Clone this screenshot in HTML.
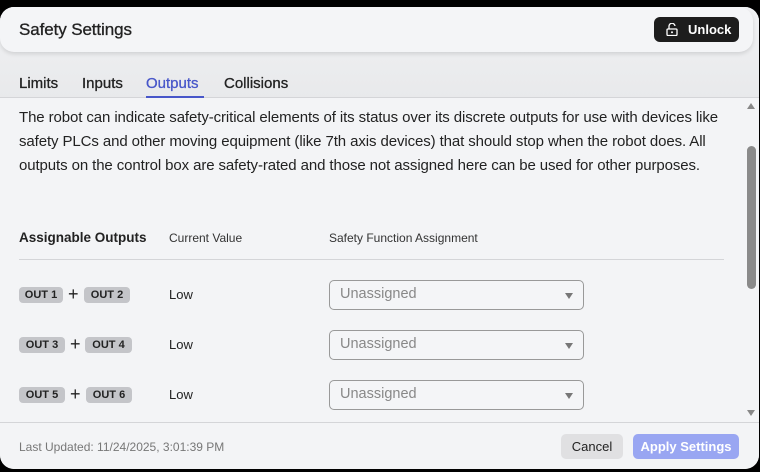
<!DOCTYPE html>
<html><head><style>
*{box-sizing:border-box;margin:0;padding:0}
body{width:760px;height:472px;background:#000;position:relative;overflow:hidden;font-family:"Liberation Sans",sans-serif;color:#222}
.modal{position:absolute;left:0;top:7px;width:759px;height:462px;background:#f3f4f6;border-radius:14px;overflow:hidden}
.tabsbg{position:absolute;left:0;top:0;width:100%;height:91px;background:linear-gradient(#f1f2f4,#e8e9eb)}
.hdr{position:absolute;left:0;top:0;width:753px;height:45px;background:#f4f5f7;border-radius:14px;box-shadow:0 2px 4px rgba(0,0,0,.12)}
.hdr h1{position:absolute;left:19px;top:13px;font-size:17px;font-weight:normal;color:#222;letter-spacing:-.1px;-webkit-text-stroke:.3px #222}
.unlock{position:absolute;left:654px;top:10px;width:85px;height:25px;background:#1d1d1d;border-radius:6px;color:#fff;font-size:13px;font-weight:bold}
.unlock span{position:absolute;left:34px;top:5px}
.unlock svg{position:absolute;left:12px;top:6px}
.tabs{position:absolute;top:68px;left:19px;font-size:15px;color:#222;-webkit-text-stroke:.3px #222}
.tabs span{position:absolute;white-space:nowrap}
.line{position:absolute;left:0;top:90px;width:100%;height:1px;background:#d4d5d8}
.content{position:absolute;left:0;top:91px;width:745px;height:325px;background:#f3f4f6}
p.desc{position:absolute;left:19px;top:8px;width:712px;font-size:15px;line-height:24px;color:#222;letter-spacing:-.1px}
.th{position:absolute;top:224px;font-size:12px;color:#333}
.sep{position:absolute;left:19px;top:252px;width:705px;height:1px;background:#d4d5d8}
.tag{position:absolute;height:16px;background:#c4c5c9;border-radius:4px;font-size:11px;font-weight:bold;line-height:16px;text-align:center;color:#222}
.plus{position:absolute;font-size:18px;color:#222}
.low{position:absolute;left:169px;font-size:13px;color:#222}
.sel{position:absolute;left:329px;width:255px;height:30px;border:1px solid #999;border-radius:5px;background:#f4f5f7;font-size:14.5px;color:#888;padding:5px 10px}
.sel i{position:absolute;right:10px;top:12px;width:0;height:0;border-left:4px solid transparent;border-right:4px solid transparent;border-top:6px solid #777}
.thumb{position:absolute;left:747px;top:146px;width:9px;height:143px;background:#8a8a8a;border-radius:5px}
.lu{position:absolute;left:19px;top:17px;font-size:12px;color:#777}
.cancel{position:absolute;left:561px;top:18px;width:62px;height:25px;background:#e0e0e2;border-radius:5px;font-size:13px;color:#222;text-align:center;line-height:25px}
.apply{position:absolute;left:633px;top:18px;width:106px;height:25px;background:#99a6f2;border-radius:5px;font-size:13px;font-weight:bold;color:#fff;text-align:center;line-height:25px}
</style></head><body>
<div class="modal">
<div class="tabsbg"></div>
<div class="hdr"><h1>Safety Settings</h1>
<div class="unlock"><svg width="12" height="13" viewBox="0 0 12 13"><path d="M3 6V3.5a3 3 0 0 1 6-.5" fill="none" stroke="#fff" stroke-width="1.3"/><rect x="1" y="6" width="10" height="6.5" rx="1" fill="none" stroke="#fff" stroke-width="1.3"/><circle cx="6" cy="9.2" r="1" fill="#fff"/></svg><span>Unlock</span></div></div>
<div class="tabs"><span style="left:0;top:0">Limits</span><span style="left:63px;top:0">Inputs</span><span style="left:127px;top:0;color:#4756c9;-webkit-text-stroke:.3px #4756c9">Outputs</span><span style="left:205px;top:0">Collisions</span></div>
<div style="position:absolute;left:146px;top:89px;width:58px;height:2px;background:#4756c9;z-index:2"></div>
<div class="line"></div>
</div>
<div style="position:absolute;left:0;top:7px;width:759px;height:462px">
<div class="content" style="top:91px">
<p class="desc">The robot can indicate safety-critical elements of its status over its discrete outputs for use with devices like safety PLCs and other moving equipment (like 7th axis devices) that should stop when the robot does. All outputs on the control box are safety-rated and those not assigned here can be used for other purposes.</p>
</div>
</div>
<div class="th" style="left:19px;top:230px;font-size:13.5px;font-weight:bold;color:#222">Assignable Outputs</div>
<div class="th" style="left:169px;top:231px">Current Value</div>
<div class="th" style="left:329px;top:231px">Safety Function Assignment</div>
<div class="sep" style="top:259px"></div>

<div class="tag" style="left:19px;top:287px;width:44px">OUT 1</div><div class="plus" style="left:68px;top:284px">+</div><div class="tag" style="left:84px;top:287px;width:46px">OUT 2</div><div class="low" style="top:287px">Low</div><div class="sel" style="top:280px">Unassigned<i></i></div>
<div class="tag" style="left:19px;top:337px;width:46px">OUT 3</div><div class="plus" style="left:70px;top:334px">+</div><div class="tag" style="left:85px;top:337px;width:47px">OUT 4</div><div class="low" style="top:337px">Low</div><div class="sel" style="top:330px">Unassigned<i></i></div>
<div class="tag" style="left:19px;top:387px;width:46px">OUT 5</div><div class="plus" style="left:70px;top:384px">+</div><div class="tag" style="left:86px;top:387px;width:46px">OUT 6</div><div class="low" style="top:387px">Low</div><div class="sel" style="top:380px">Unassigned<i></i></div>

<div class="thumb"></div>
<div style="position:absolute;left:747px;top:103px;width:0;height:0;border-left:4px solid transparent;border-right:4px solid transparent;border-bottom:6px solid #888"></div>
<div style="position:absolute;left:747px;top:410px;width:0;height:0;border-left:4px solid transparent;border-right:4px solid transparent;border-top:6px solid #888"></div>
<div style="position:absolute;left:0;top:422px;width:759px;height:47px;background:#f3f4f6;border-top:1px solid #d4d5d8;border-radius:0 0 14px 14px">
<div class="lu">Last Updated: 11/24/2025, 3:01:39 PM</div>
<div class="cancel" style="top:11px">Cancel</div>
<div class="apply" style="top:11px">Apply Settings</div>
</div>
</body></html>
